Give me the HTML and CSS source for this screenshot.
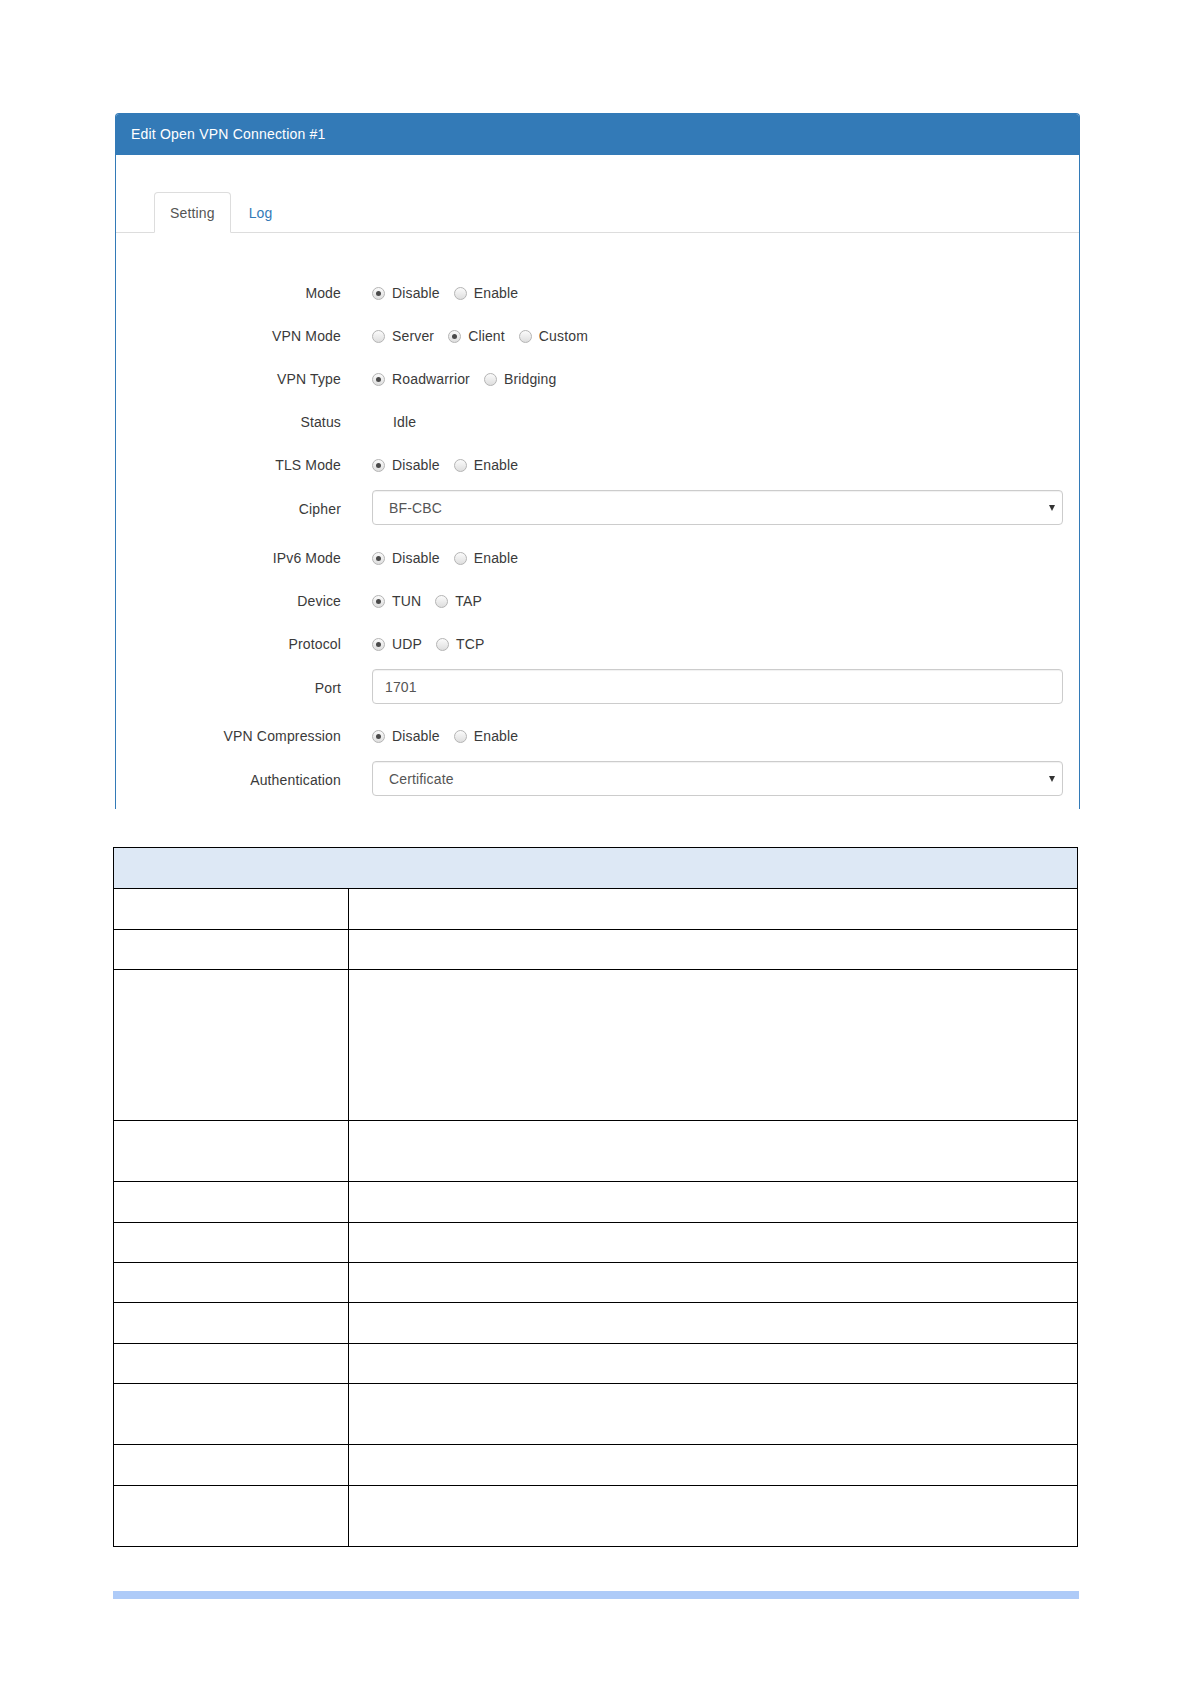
FILE: index.html
```html
<!DOCTYPE html>
<html>
<head>
<meta charset="utf-8">
<title>Edit Open VPN Connection #1</title>
<link rel="stylesheet" href="styles.css">
</head>
<body>
<div class="page">
  <div class="panel">
    <div class="panel-heading">Edit Open VPN Connection #1</div>
    <div class="panel-body">
      <ul class="tabs">
        <li class="tab active">Setting</li>
        <li class="tab link">Log</li>
      </ul>
      <div class="form">
        <div class="frow">
          <div class="lbl">Mode</div>
          <div class="ctl"><span class="opt"><span class="radio on"></span>Disable</span><span class="opt"><span class="radio"></span>Enable</span></div>
        </div>
        <div class="frow">
          <div class="lbl">VPN Mode</div>
          <div class="ctl"><span class="opt"><span class="radio"></span>Server</span><span class="opt"><span class="radio on"></span>Client</span><span class="opt"><span class="radio"></span>Custom</span></div>
        </div>
        <div class="frow">
          <div class="lbl">VPN Type</div>
          <div class="ctl"><span class="opt"><span class="radio on"></span>Roadwarrior</span><span class="opt"><span class="radio"></span>Bridging</span></div>
        </div>
        <div class="frow">
          <div class="lbl">Status</div>
          <div class="ctl"><span class="static">Idle</span></div>
        </div>
        <div class="frow">
          <div class="lbl">TLS Mode</div>
          <div class="ctl"><span class="opt"><span class="radio on"></span>Disable</span><span class="opt"><span class="radio"></span>Enable</span></div>
        </div>
        <div class="frow input">
          <div class="lbl">Cipher</div>
          <div class="select"><span>BF-CBC</span><span class="caret"></span></div>
        </div>
        <div class="frow">
          <div class="lbl">IPv6 Mode</div>
          <div class="ctl"><span class="opt"><span class="radio on"></span>Disable</span><span class="opt"><span class="radio"></span>Enable</span></div>
        </div>
        <div class="frow">
          <div class="lbl">Device</div>
          <div class="ctl"><span class="opt"><span class="radio on"></span>TUN</span><span class="opt"><span class="radio"></span>TAP</span></div>
        </div>
        <div class="frow">
          <div class="lbl">Protocol</div>
          <div class="ctl"><span class="opt"><span class="radio on"></span>UDP</span><span class="opt"><span class="radio"></span>TCP</span></div>
        </div>
        <div class="frow input port">
          <div class="lbl">Port</div>
          <div class="textbox">1701</div>
        </div>
        <div class="frow">
          <div class="lbl">VPN Compression</div>
          <div class="ctl"><span class="opt"><span class="radio on"></span>Disable</span><span class="opt"><span class="radio"></span>Enable</span></div>
        </div>
        <div class="frow input">
          <div class="lbl">Authentication</div>
          <div class="select"><span>Certificate</span><span class="caret"></span></div>
        </div>
      </div>
    </div>
  </div>

  <div class="tbl">
    <div class="row head"><div class="cell full"></div></div>
    <div class="row"><div class="cell"></div><div class="cell"></div></div>
    <div class="row s"><div class="cell"></div><div class="cell"></div></div>
    <div class="row xtall"><div class="cell"></div><div class="cell"></div></div>
    <div class="row tall"><div class="cell"></div><div class="cell"></div></div>
    <div class="row"><div class="cell"></div><div class="cell"></div></div>
    <div class="row s"><div class="cell"></div><div class="cell"></div></div>
    <div class="row s"><div class="cell"></div><div class="cell"></div></div>
    <div class="row"><div class="cell"></div><div class="cell"></div></div>
    <div class="row s"><div class="cell"></div><div class="cell"></div></div>
    <div class="row tall"><div class="cell"></div><div class="cell"></div></div>
    <div class="row"><div class="cell"></div><div class="cell"></div></div>
    <div class="row tall"><div class="cell"></div><div class="cell"></div></div>
  </div>

  <div class="bar"></div>
</div>
</body>
</html>
```

FILE: styles.css
```css
* { box-sizing: border-box; }

html, body {
  margin: 0;
  padding: 0;
  background: #ffffff;
}

body {
  font-family: "Liberation Sans", Arial, Helvetica, sans-serif;
  font-size: 14px;
  color: #3a3a3a;
  letter-spacing: 0.15px;
}

.page {
  padding: 113px 0 0 113px;
  width: 1191px;
  height: 1684px;
}

.panel {
  margin-left: 2px;
  width: 965px;
  height: 696px;
  overflow: hidden;
  border: 1px solid #337ab7;
  border-bottom: 0;
  border-radius: 4px 4px 0 0;
  background: #ffffff;
}

.panel-heading {
  height: 41px;
  line-height: 41px;
  background: #337ab7;
  color: #ffffff;
  padding-left: 15px;
  font-size: 14px;
  letter-spacing: 0.2px;
}

.panel-body {
  padding-top: 37px;
}

.tabs {
  list-style: none;
  margin: 0;
  padding: 0 0 0 38px;
  display: flex;
  border-bottom: 1px solid #dddddd;
}

.tab {
  height: 41px;
  line-height: 41px;
  padding: 0 15px;
  margin-right: 2px;
  margin-bottom: -1px;
  border: 1px solid transparent;
  border-radius: 4px 4px 0 0;
}

.tab.active {
  border-color: #dddddd;
  border-bottom-color: #ffffff;
  background: #ffffff;
  color: #555555;
}

.tab.link {
  color: #337ab7;
}

.form {
  padding-top: 45px;
  padding-right: 16px;
}

.frow {
  display: grid;
  grid-template-columns: 225px 1fr;
  column-gap: 31px;
  align-items: center;
  height: 28px;
  margin-bottom: 15px;
}

.frow.input {
  height: 35px;
  margin-top: -3px;
  margin-bottom: 18px;
}

.frow.input.port {
  margin-bottom: 17px;
}

.lbl {
  text-align: right;
  white-space: nowrap;
  padding-top: 2px;
}

.ctl {
  display: flex;
  align-items: center;
  padding-top: 2px;
}

.opt {
  display: inline-flex;
  align-items: center;
  margin-right: 14px;
}

.radio {
  display: inline-flex;
  align-items: center;
  justify-content: center;
  width: 13px;
  height: 13px;
  border-radius: 50%;
  border: 1px solid #b4b4b4;
  background: linear-gradient(#fbfbfb, #dedede);
  margin-right: 7px;
}

.radio.on::after {
  content: "";
  width: 5px;
  height: 5px;
  border-radius: 50%;
  background: #4a4a4a;
}

.static {
  padding-left: 21px;
}

.select,
.textbox {
  height: 35px;
  border: 1px solid #cccccc;
  border-radius: 4px;
  background: #ffffff;
  color: #555555;
  display: flex;
  align-items: center;
  padding-top: 1px;
  box-shadow: inset 0 1px 1px rgba(0, 0, 0, 0.06);
}

.select {
  justify-content: space-between;
  padding-left: 16px;
  padding-right: 7px;
}

.textbox {
  padding-left: 12px;
}

.caret {
  width: 0;
  height: 0;
  border-left: 3.5px solid transparent;
  border-right: 3.5px solid transparent;
  border-top: 6px solid #333333;
}

.tbl {
  margin-top: 38px;
  width: 965px;
  border: 1px solid #000000;
}

.row {
  display: grid;
  grid-template-columns: 235px 1fr;
  height: 41px;
  border-top: 1px solid #000000;
}

.row.s { height: 40px; }
.row.tall { height: 61px; }
.row.xtall { height: 151px; }

.row.head {
  height: 40px;
  border-top: 0;
  grid-template-columns: 1fr;
  background: #dde8f5;
}

.cell:first-child {
  border-right: 1px solid #000000;
}

.cell.full {
  border-right: 0;
}

.bar {
  margin-top: 44px;
  width: 966px;
  height: 8px;
  background: #aecbf8;
}
```
